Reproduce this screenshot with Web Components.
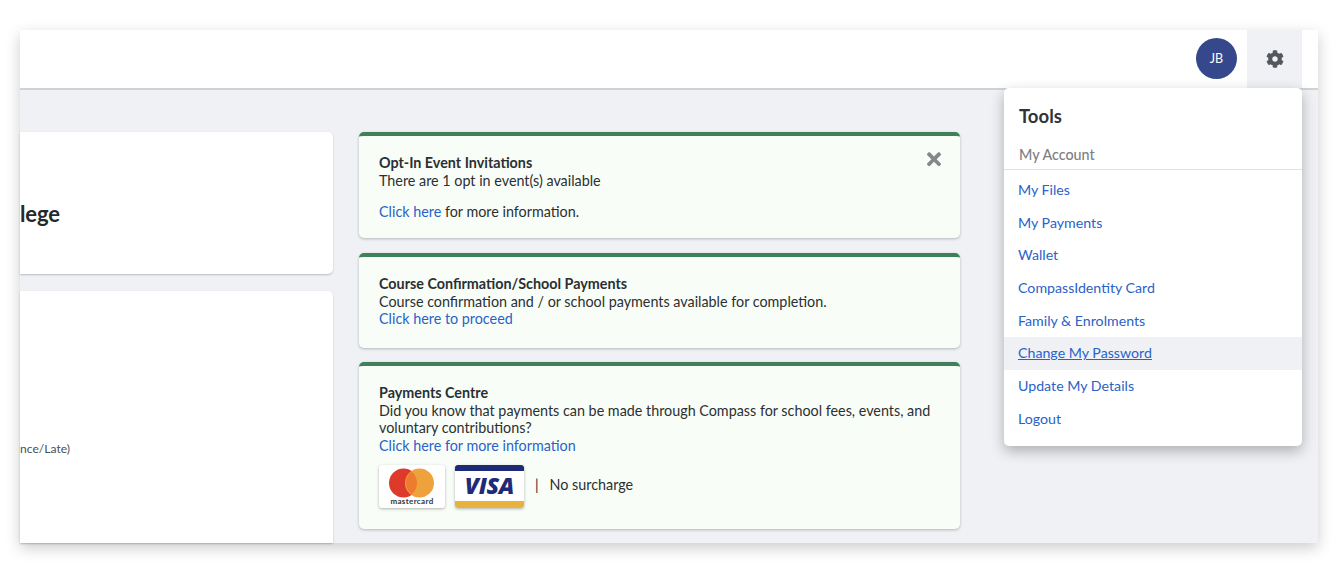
<!DOCTYPE html>
<html>
<head>
<meta charset="utf-8">
<title>Tools menu</title>
<style>
    html, body { margin: 0; background: #fff; }
    body { box-sizing: border-box; height: 572px; padding: 30px 0 0 20px; font-family: Lato, "Liberation Sans", sans-serif; color: #2b2f33; }
</style>
</head>
<body>
<app-window>
    <top-bar slot="bar">
        <user-avatar>JB</user-avatar>
        <gear-button></gear-button>
    </top-bar>
    <plain-card slot="left" style="height:142px">
        <span style="font-size:22px;font-weight:700;color:#25282b;letter-spacing:-.1px;margin-top:68px;display:block">lege</span>
    </plain-card>
    <plain-card slot="left" open style="flex:1">
        <span style="font-size:12.1px;color:#4b4f54;margin-top:150px;display:block">nce/Late)</span>
    </plain-card>

    <info-card slot="mid" closable style="height:106px;margin-bottom:.5px">
        <b>Opt-In Event Invitations</b><br>
        There are 1 opt in event(s) available
        <div style="height:13.5px"></div>
        <a>Click here</a> for more information.
    </info-card>
    <info-card slot="mid" style="height:94.5px">
        <b>Course Confirmation/School Payments</b><br>
        Course confirmation and / or school payments available for completion.<br>
        <a>Click here to proceed</a>
    </info-card>
    <info-card slot="mid" style="height:167px">
        <b>Payments Centre</b><br>
        Did you know that payments can be made through Compass for school fees, events, and voluntary contributions?<br>
        <a>Click here for more information</a>
        <pay-logos></pay-logos>
    </info-card>

    <tools-menu slot="menu" heading="Tools" section="My Account">
        <menu-link>My Files</menu-link>
        <menu-link>My Payments</menu-link>
        <menu-link>Wallet</menu-link>
        <menu-link>CompassIdentity Card</menu-link>
        <menu-link>Family &amp; Enrolments</menu-link>
        <menu-link active>Change My Password</menu-link>
        <menu-link>Update My Details</menu-link>
        <menu-link>Logout</menu-link>
    </tools-menu>
</app-window>

<script>
const html = String.raw

class ShadowBase extends HTMLElement {
    connectedCallback() {
        if (this.shadowRoot)
            return
        this.attachShadow({ mode: "open" })
        this.shadowRoot.innerHTML = this.render()
    }
}

class AppWindow extends ShadowBase {
    render() {
        return html`
            <style>
                :host {
                    display: flex;
                    flex-direction: column;
                    position: relative;
                    width: 1298px;
                    height: 513px;
                    background: #eff1f5;
                    box-shadow: 0 5px 14px rgba(0, 0, 0, .2);
                }
                main {
                    flex: 1;
                    min-height: 0;
                    display: grid;
                    grid-template-columns: 313px 601px;
                    column-gap: 26px;
                    padding-top: 42px;
                }
                .left { display: flex; flex-direction: column; gap: 17px; }
                .mid { display: flex; flex-direction: column; gap: 14.5px; align-items: stretch; }
            </style>
            <slot name="bar"></slot>
            <main>
                <div class="left"><slot name="left"></slot></div>
                <div class="mid"><slot name="mid"></slot></div>
            </main>
            <slot name="menu"></slot>
        `
    }
}

class TopBar extends ShadowBase {
    render() {
        return html`
            <style>
                :host {
                    display: flex;
                    justify-content: flex-end;
                    align-items: stretch;
                    flex: none;
                    height: 58px;
                    padding-right: 16px;
                    background: #fff;
                    border-bottom: 2px solid #cfd2d6;
                }
            </style>
            <slot></slot>
        `
    }
}

class UserAvatar extends ShadowBase {
    render() {
        return html`
            <style>
                :host {
                    display: flex;
                    align-items: center;
                    justify-content: center;
                    align-self: center;
                    width: 41px;
                    height: 41px;
                    margin: 0 10px 1px 0;
                    border-radius: 50%;
                    background: #36488c;
                    color: #fff;
                    font-size: 12.5px;
                    font-weight: 400;
                }
            </style>
            <slot></slot>
        `
    }
}

class GearButton extends ShadowBase {
    render() {
        return html`
            <style>
                :host {
                    display: flex;
                    align-items: center;
                    justify-content: center;
                    width: 55px;
                    background: #eff1f5;
                }
                svg { width: 18px; height: 18px; display: block; }
            </style>
            <svg viewBox="0 0 512 512"><path fill="#53575e" d="M487.4 315.7l-42.6-24.6c4.3-23.2 4.3-47 0-70.2l42.6-24.6c4.9-2.8 7.1-8.6 5.5-14-11.1-35.6-30-67.8-54.7-94.6-3.8-4.1-10-5.1-14.8-2.3L380.8 110c-17.9-15.4-38.5-27.3-60.8-35.1V25.8c0-5.6-3.9-10.5-9.4-11.7-36.7-8.2-74.3-7.8-109.2 0-5.5 1.2-9.4 6.1-9.4 11.7V75c-22.2 7.9-42.8 19.8-60.8 35.1L88.7 85.5c-4.9-2.8-11-1.9-14.8 2.3-24.7 26.7-43.6 58.9-54.7 94.6-1.7 5.4.6 11.2 5.5 14L67.3 221c-4.3 23.2-4.3 47 0 70.2l-42.6 24.6c-4.9 2.8-7.1 8.6-5.5 14 11.1 35.6 30 67.8 54.7 94.6 3.8 4.1 10 5.1 14.8 2.3l42.6-24.6c17.9 15.4 38.5 27.3 60.8 35.1v49.2c0 5.6 3.9 10.5 9.4 11.7 36.7 8.2 74.3 7.8 109.2 0 5.5-1.2 9.4-6.1 9.4-11.7v-49.2c22.2-7.9 42.8-19.8 60.8-35.1l42.6 24.6c4.9 2.8 11 1.9 14.8-2.3 24.7-26.7 43.6-58.9 54.7-94.6 1.5-5.5-.7-11.3-5.6-14.1zM256 336c-44.1 0-80-35.9-80-80s35.9-80 80-80 80 35.9 80 80-35.9 80-80 80z"/></svg>
        `
    }
}

class PlainCard extends ShadowBase {
    render() {
        return html`
            <style>
                :host {
                    display: block;
                    box-sizing: border-box;
                    background: #fff;
                    border-radius: 0 5px ${this.hasAttribute("open") ? "0" : "5px"} 0;
                    box-shadow: 0 1px 2px rgba(0, 0, 0, .22);
                    overflow: hidden;
                }
            </style>
            <slot></slot>
        `
    }
}

class InfoCard extends ShadowBase {
    render() {
        const close = this.hasAttribute("closable") ? html`
            <svg class="close" viewBox="0 0 352 512"><path fill="#84888c" d="M242.72 256l100.07-100.07c12.28-12.28 12.28-32.19 0-44.48l-22.24-22.24c-12.28-12.28-32.19-12.28-44.48 0L176 189.28 75.93 89.21c-12.28-12.28-32.19-12.28-44.48 0L9.21 111.45c-12.28 12.28-12.28 32.19 0 44.48L109.28 256 9.21 356.07c-12.28 12.28-12.28 32.19 0 44.48l22.24 22.24c12.28 12.28 32.2 12.28 44.48 0L176 322.72l100.07 100.07c12.28 12.28 32.2 12.28 44.48 0l22.24-22.24c12.28-12.28 12.28-32.19 0-44.48L242.72 256z"/></svg>
        ` : ""
        return html`
            <style>
                :host {
                    display: block;
                    position: relative;
                    box-sizing: border-box;
                    padding: 18px 20px 0;
                    background: #f8fef7;
                    border-top: 4px solid #3f7f5a;
                    border-radius: 5px;
                    box-shadow: 0 1px 3px rgba(0, 0, 0, .25);
                    font-size: 14.34px;
                    line-height: 17.7px;
                    color: #2b2f33;
                }
                .close { position: absolute; top: 13px; right: 19px; width: 14px; height: 20.4px; }
                ::slotted(a) { color: #2a62c9; }
                ::slotted(b) { font-weight: 700; }
            </style>
            ${close}
            <slot></slot>
        `
    }
}

class PayLogos extends ShadowBase {
    render() {
        return html`
            <style>
                :host {
                    display: flex;
                    align-items: center;
                    gap: 10px;
                    margin-top: 10px;
                    font-size: 14.34px;
                    color: #2b2f33;
                }
                .master {
                    position: relative;
                    box-sizing: border-box;
                    width: 66px;
                    height: 43px;
                    background: #fff;
                    border-radius: 3px;
                    box-shadow: 0 1px 3px rgba(0, 0, 0, .3);
                }
                .master svg { position: absolute; left: 9px; top: 3px; }
                .master span {
                    position: absolute;
                    left: 0;
                    right: 0;
                    bottom: 1.5px;
                    text-align: center;
                    font-size: 8px;
                    line-height: 9px;
                    font-weight: 700;
                    letter-spacing: .35px;
                    color: #333;
                }
                .visa {
                    display: flex;
                    flex-direction: column;
                    width: 69px;
                    height: 43px;
                    border-radius: 3px;
                    overflow: hidden;
                    background: #fff;
                    box-shadow: 0 1px 3px rgba(0, 0, 0, .3);
                }
                .visa i { display: block; flex: none; }
                .visa .top { height: 6.5px; background: #1c2a78; }
                .visa .low { height: 7px; background: #e8b23f; }
                .visa b {
                    flex: 1;
                    display: flex;
                    align-items: center;
                    justify-content: center;
                    font-family: "Open Sans", sans-serif;
                    font-size: 23px;
                    font-style: italic;
                    font-weight: 800;
                    letter-spacing: -.3px;
                    color: #1f2a78;
                }
                .txt { margin: 0 0 3px 1px; }
                .txt span { margin-right: 11px; }
            </style>
            <div class="master">
                <svg width="48" height="30" viewBox="0 0 48 30">
                    <circle cx="15.5" cy="15" r="14.5" fill="#dd3a2c"/>
                    <circle cx="31.5" cy="15" r="14.5" fill="#eda23c"/>
                    <path fill="#ee7b30" d="M23.5 3.6a14.5 14.5 0 0 1 0 22.8 14.5 14.5 0 0 1 0-22.8z"/>
                </svg>
                <span>mastercard</span>
            </div>
            <div class="visa"><i class="top"></i><b>VISA</b><i class="low"></i></div>
            <div class="txt"><span>|</span>No surcharge</div>
        `
    }
}

class ToolsMenu extends ShadowBase {
    render() {
        return html`
            <style>
                :host {
                    display: block;
                    position: absolute;
                    top: 58px;
                    left: 984px;
                    box-sizing: border-box;
                    width: 298px;
                    height: 358px;
                    background: #fff;
                    border-radius: 5px;
                    box-shadow: 0 5px 14px rgba(0, 0, 0, .28);
                }
                h2 {
                    margin: 0;
                    padding: 16px 15px 0;
                    font-size: 18.5px;
                    line-height: 24px;
                    font-weight: 700;
                    color: #30343a;
                }
                h3 {
                    margin: 0;
                    padding: 18px 15px 5px;
                    font-size: 14.34px;
                    line-height: 18px;
                    font-weight: 500;
                    color: #7d7f82;
                    border-bottom: 1px solid #dfe1e4;
                }
                nav { padding-top: 4px; }
            </style>
            <h2>${this.getAttribute("heading")}</h2>
            <h3>${this.getAttribute("section")}</h3>
            <nav><slot></slot></nav>
        `
    }
}

class MenuLink extends ShadowBase {
    render() {
        return html`
            <style>
                :host {
                    display: block;
                    height: 32.7px;
                    padding-left: 14px;
                    font-size: 14.2px;
                    line-height: 31.4px;
                    color: #2a62c9;
                }
                :host([active]) { background: #eff1f5; text-decoration: underline; }
            </style>
            <slot></slot>
        `
    }
}

customElements.define("app-window", AppWindow)
customElements.define("top-bar", TopBar)
customElements.define("user-avatar", UserAvatar)
customElements.define("gear-button", GearButton)
customElements.define("plain-card", PlainCard)
customElements.define("info-card", InfoCard)
customElements.define("pay-logos", PayLogos)
customElements.define("tools-menu", ToolsMenu)
customElements.define("menu-link", MenuLink)
</script>
</body>
</html>
